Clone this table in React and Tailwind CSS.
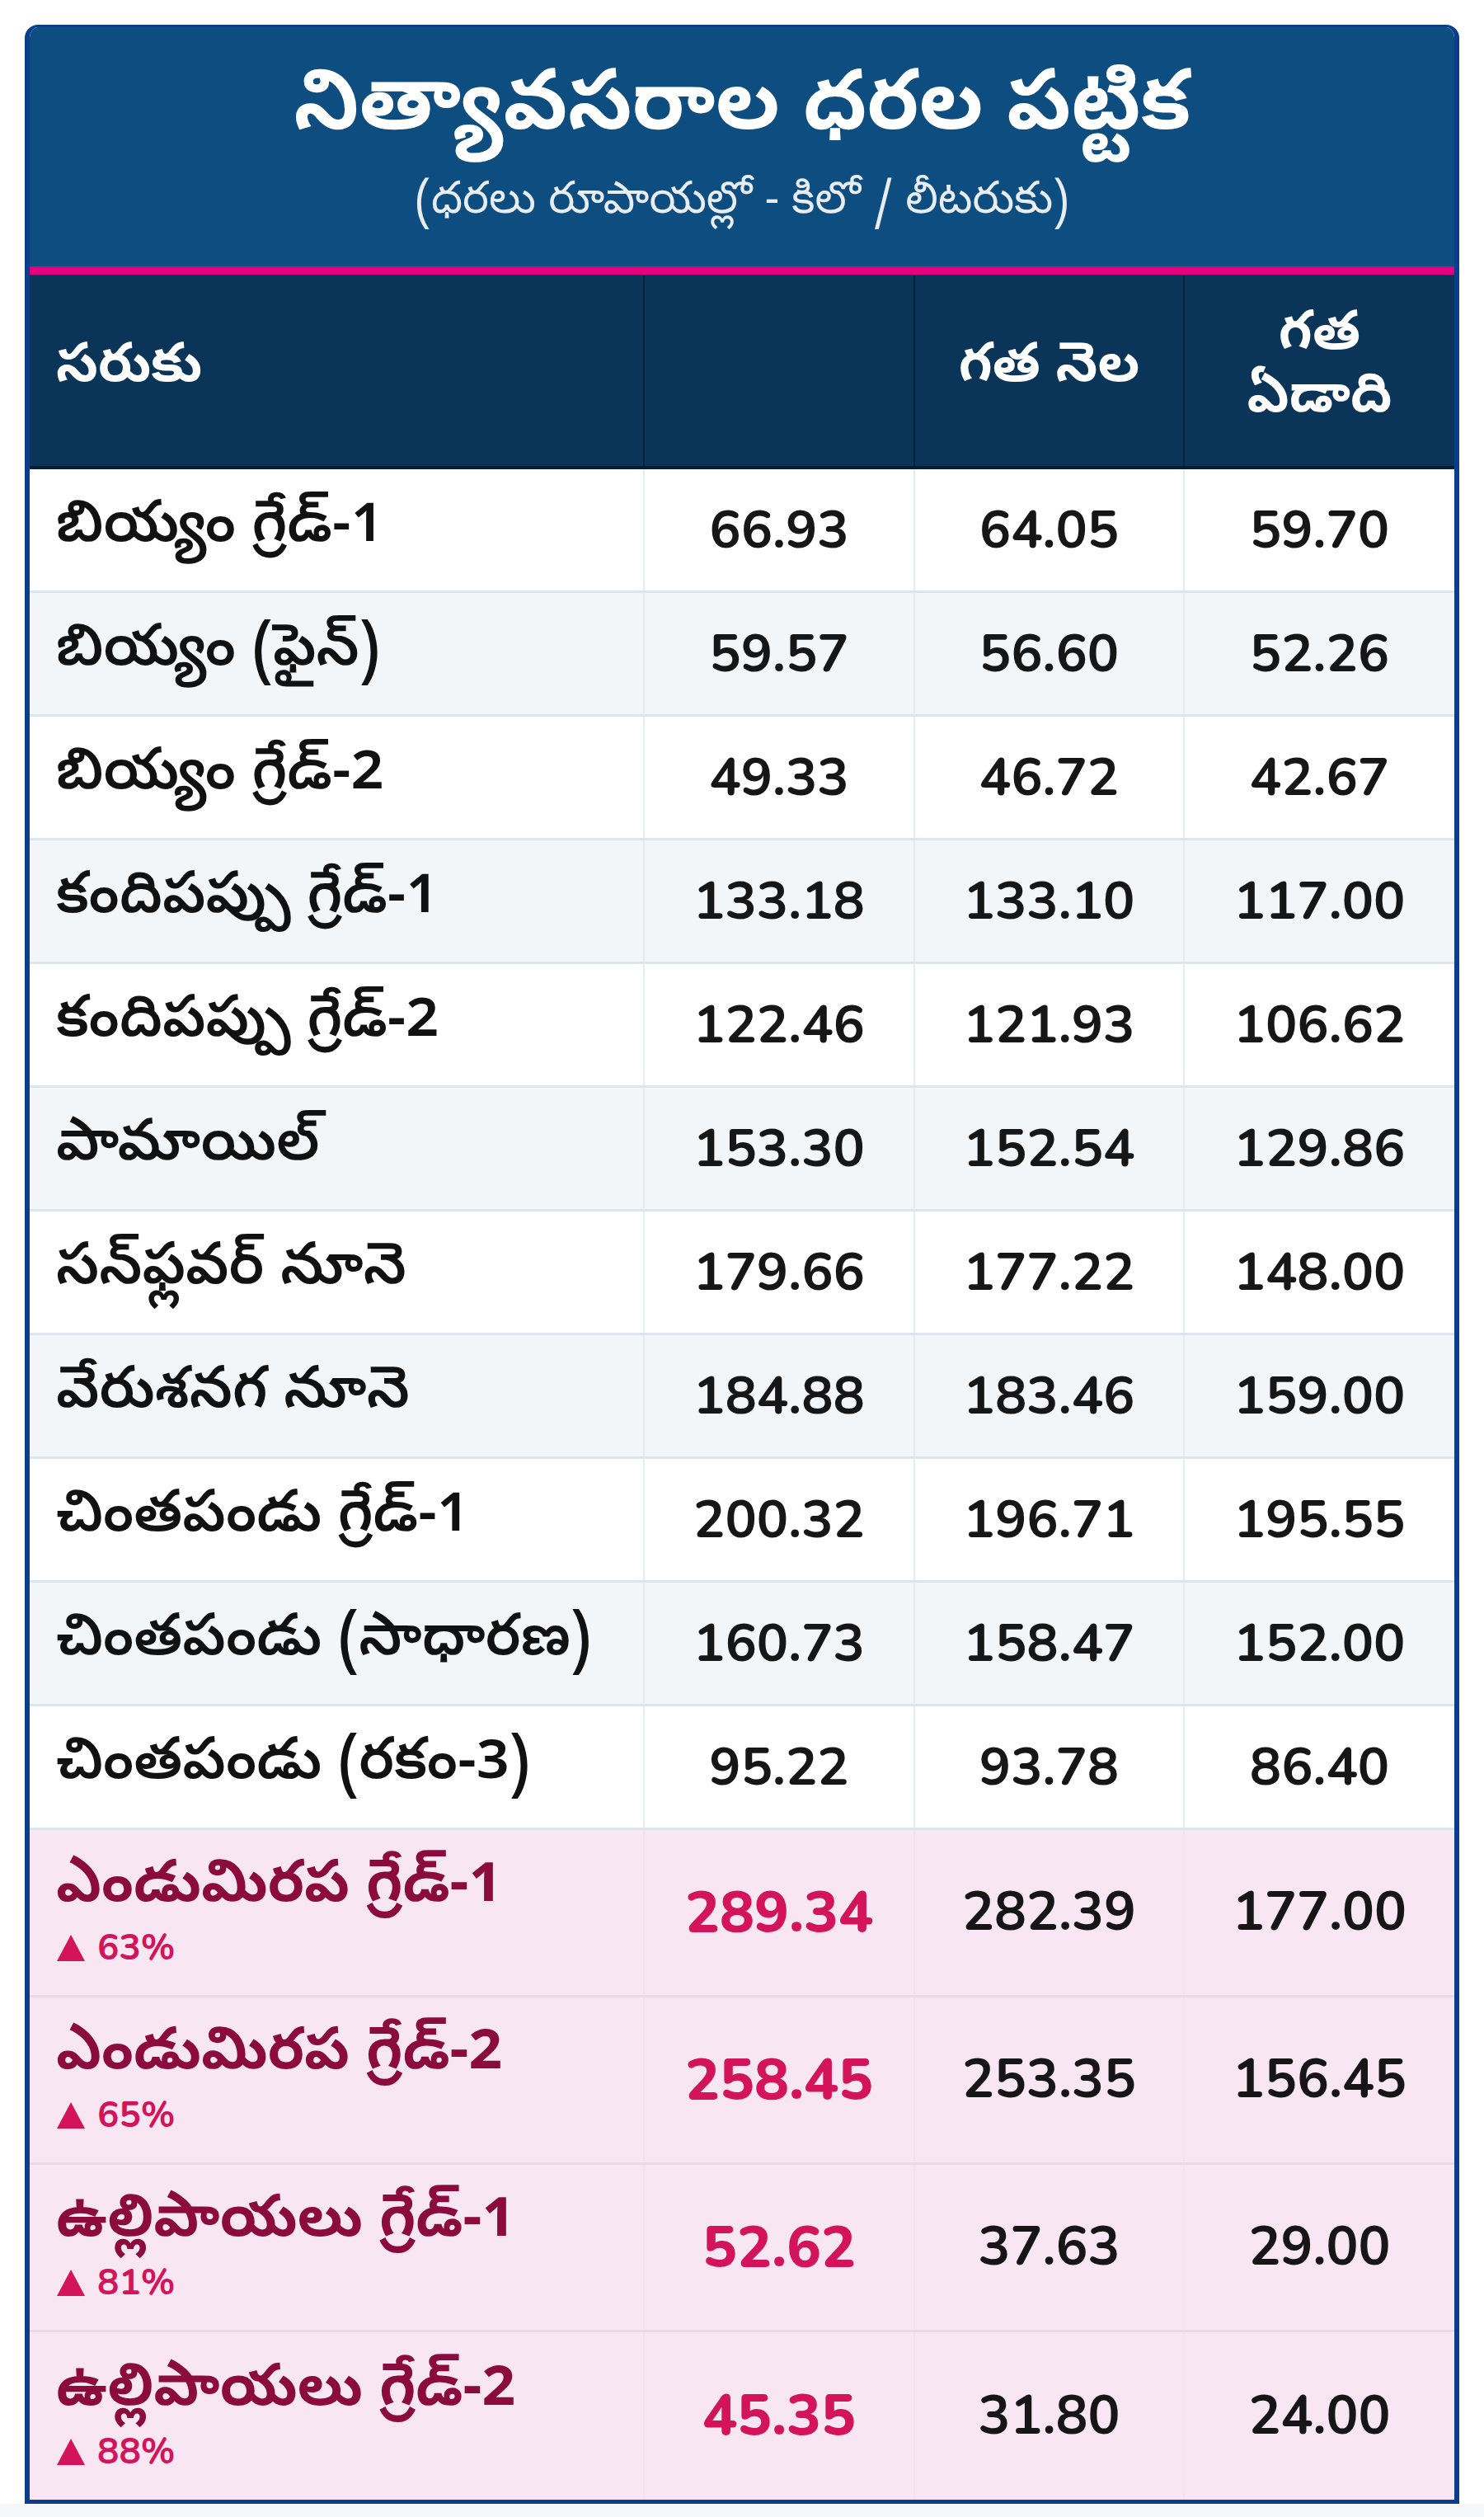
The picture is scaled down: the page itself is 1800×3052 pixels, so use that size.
import React from 'react';

const TE = { fontFamily: '"Noto Sans Telugu", "Lohit Telugu", "Noto Sans", "Open Sans", sans-serif' };
const NUM = { fontFamily: '"Nunito", "Open Sans", "Noto Sans", sans-serif' };

const rows = [
  { name: 'బియ్యం గ్రేడ్-1', now: '66.93', month: '64.05', year: '59.70' },
  { name: 'బియ్యం (ఫైన్)', now: '59.57', month: '56.60', year: '52.26' },
  { name: 'బియ్యం గ్రేడ్-2', now: '49.33', month: '46.72', year: '42.67' },
  { name: 'కందిపప్పు గ్రేడ్-1', now: '133.18', month: '133.10', year: '117.00' },
  { name: 'కందిపప్పు గ్రేడ్-2', now: '122.46', month: '121.93', year: '106.62' },
  { name: 'పామాయిల్', now: '153.30', month: '152.54', year: '129.86' },
  { name: 'సన్‌ఫ్లవర్ నూనె', now: '179.66', month: '177.22', year: '148.00' },
  { name: 'వేరుశనగ నూనె', now: '184.88', month: '183.46', year: '159.00' },
  { name: 'చింతపండు గ్రేడ్-1', now: '200.32', month: '196.71', year: '195.55' },
  { name: 'చింతపండు (సాధారణ)', now: '160.73', month: '158.47', year: '152.00' },
  { name: 'చింతపండు (రకం-3)', now: '95.22', month: '93.78', year: '86.40' },
];

const hot = [
  { name: 'ఎండుమిరప గ్రేడ్-1', pct: '63%', now: '289.34', month: '282.39', year: '177.00' },
  { name: 'ఎండుమిరప గ్రేడ్-2', pct: '65%', now: '258.45', month: '253.35', year: '156.45' },
  { name: 'ఉల్లిపాయలు గ్రేడ్-1', pct: '81%', now: '52.62', month: '37.63', year: '29.00' },
  { name: 'ఉల్లిపాయలు గ్రేడ్-2', pct: '88%', now: '45.35', month: '31.80', year: '24.00' },
];

const cols = 'grid grid-cols-[746px_328px_327px_1fr]';

const Up = () => (
  <svg width="36" height="34" viewBox="0 0 36 34" className="shrink-0">
    <path d="M18 1 L35 33 L1 33 Z" fill="#d4145a" />
  </svg>
);

export default function App() {
  return (
    <div className="min-h-[3052px] bg-[#f4f6f7]">
      <div className="bg-white pt-[30px] pl-[30px] pr-[30px]">
        <div className="w-[1740px] rounded-t-[16px] border-x-[6px] border-t-[3px] border-[#0b3d8f] overflow-hidden">
          {/* title */}
          <div className="h-[290px] bg-[#0e4d7f] flex flex-col items-center justify-center text-white" style={TE}>
            <h1 className="text-[101px] font-bold leading-none mt-[4px]">నిత్యావసరాల ధరల పట్టిక</h1>
            <p className="text-[54px] leading-none mt-[34px] text-white/90">(ధరలు రూపాయల్లో - కిలో / లీటరుకు)</p>
          </div>
          <div className="h-[10px] bg-[#e5007d]" />

          {/* table head */}
          <div className={`${cols} h-[236px] bg-[#0a3458] border-b-[4px] border-[#071d30] text-white font-bold text-[66px]`} style={TE}>
            <div className="flex items-center pl-[32px] border-r-[2px] border-[#06223b]">సరుకు</div>
            <div className="border-r-[2px] border-[#06223b]" />
            <div className="flex items-center justify-center border-r-[2px] border-[#06223b]">గత నెల</div>
            <div className="flex flex-col items-center justify-center leading-[76px]">
              <span>గత</span>
              <span>ఏడాది</span>
            </div>
          </div>

          {/* regular rows */}
          {rows.map((r, i) => (
            <div
              key={r.name}
              className={`${cols} h-[150px] border-b-[3px] border-[#dde6ea] ${i % 2 ? 'bg-[#f3f6f8]' : 'bg-white'}`}
            >
              <div className="flex items-center pl-[32px] text-[70px] font-semibold text-[#111] border-r-[2px] border-[#e6edef]" style={TE}>
                {r.name}
              </div>
              <div className="flex items-center justify-center text-[64px] font-bold text-[#161616] border-r-[2px] border-[#e6edef]" style={NUM}>{r.now}</div>
              <div className="flex items-center justify-center text-[64px] font-bold text-[#161616] border-r-[2px] border-[#e6edef]" style={NUM}>{r.month}</div>
              <div className="flex items-center justify-center text-[64px] font-bold text-[#161616]" style={NUM}>{r.year}</div>
            </div>
          ))}

          {/* highlighted rows */}
          {hot.map((r, i) => (
            <div
              key={r.name}
              className={`${cols} h-[203px] bg-[#f8e7f3] ${i < hot.length - 1 ? 'border-b-[3px] border-[#e9dbe6]' : ''}`}
            >
              <div className="flex flex-col justify-center pl-[32px] border-r-[2px] border-[#efe3ec]">
                <span className="text-[71px] font-bold text-[#8a0b3c] leading-[78px]" style={TE}>{r.name}</span>
                <span className="flex items-center gap-[14px] text-[44px] font-bold text-[#d4145a] leading-[48px] mt-[8px]" style={NUM}>
                  <Up />
                  {r.pct}
                </span>
              </div>
              <div className="flex items-center justify-center text-[70px] font-extrabold text-[#d4145a] border-r-[2px] border-[#efe3ec]" style={NUM}>{r.now}</div>
              <div className="flex items-center justify-center text-[65px] font-bold text-[#161616] border-r-[2px] border-[#efe3ec]" style={NUM}>{r.month}</div>
              <div className="flex items-center justify-center text-[65px] font-bold text-[#161616]" style={NUM}>{r.year}</div>
            </div>
          ))}
          <div className="h-[5px] bg-[#0b3d8f]" />
        </div>
      </div>
    </div>
  );
}
